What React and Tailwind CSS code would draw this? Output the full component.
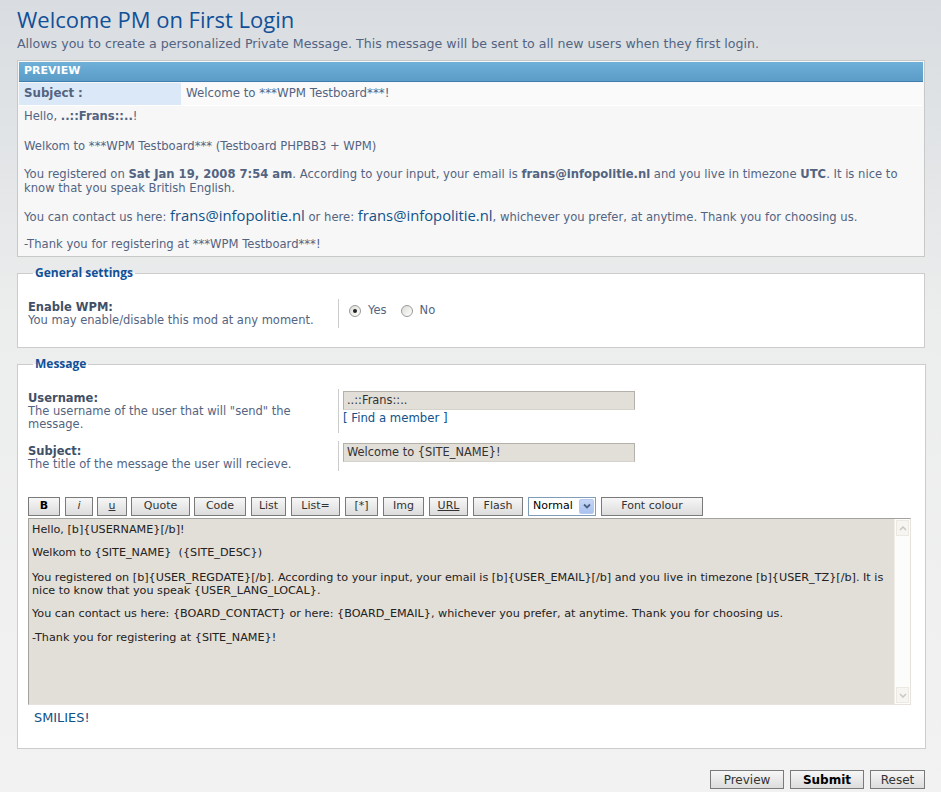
import React from "react";

const V = "font-['DejaVu_Sans',Verdana,sans-serif]";
const T = "font-['Open_Sans','DejaVu_Sans',sans-serif]";

function Btn({ children, className = "" }) {
  return (
    <div
      className={`h-[19px] shrink-0 flex items-center justify-center border border-[#7a7a7a] bg-gradient-to-b from-[#f7f7f7] to-[#dcdcdc] text-[11px] text-[#333] ${V} ${className}`}
    >
      {children}
    </div>
  );
}

function Radio({ checked }) {
  return (
    <span className="w-[12px] h-[12px] rounded-full border border-[#9a9a9a] bg-gradient-to-br from-[#dcdcd6] to-white flex items-center justify-center">
      {checked && <span className="w-[4px] h-[4px] rounded-full bg-[#222]" />}
    </span>
  );
}

export default function App() {
  return (
    <div className={`w-[941px] h-[792px] overflow-hidden bg-gradient-to-b from-[#d9dde1] via-[#eceded] via-40% to-[#f2f2f2] ${V}`}>
      <div className="pl-[17px] pr-[16px]">
        <h1 className={`${T} text-[22px] leading-[26px] text-[#115098] pt-[6px]`}>Welcome PM on First Login</h1>
        <p className="text-[12.6px] leading-[14px] text-[#536482] mt-[5px]">
          Allows you to create a personalized Private Message. This message will be sent to all new users when they first login.
        </p>

        {/* Preview */}
        <div className="mt-[9px] border border-[#c8c8c8] p-[1px] bg-[#f7f7f7]">
          <div className="h-[20px] bg-gradient-to-b from-[#6fb0d9] to-[#5b9cc8] border-b border-[#3f7fb0] flex items-center pl-[5px] text-[11px] font-bold text-white">
            PREVIEW
          </div>
          <div className="flex h-[23px] mt-[1px] border-b border-white text-[11.8px]">
            <div className="w-[162px] bg-[#dbe8f8] flex items-center pl-[5px] font-bold text-[#536482]">Subject :</div>
            <div className="flex-1 bg-[#fafafa] flex items-center pl-[5px] text-[#536482]">Welcome to ***WPM Testboard***!</div>
          </div>
          <div className="px-[5px] pt-[3px] pb-[4px] text-[11.6px] leading-[14px] text-[#536482]">
            <p>Hello, <b>..::Frans::..</b>!</p>
            <p className="mt-[16px]">Welkom to ***WPM Testboard*** (Testboard PHPBB3 + WPM)</p>
            <p className="mt-[14px]">
              You registered on <b>Sat Jan 19, 2008 7:54 am</b>. According to your input, your email is <b>frans@infopolitie.nl</b> and you live in timezone <b>UTC</b>. It is nice to know that you speak British English.
            </p>
            <p className="mt-[13px]">
              You can contact us here: <a className={`${T} text-[14.8px] text-[#105289]`}>frans@infopolitie.nl</a> or here: <a className={`${T} text-[14.8px] text-[#105289]`}>frans@infopolitie.nl</a>, whichever you prefer, at anytime. Thank you for choosing us.
            </p>
            <p className="mt-[13px]">-Thank you for registering at ***WPM Testboard***!</p>
          </div>
        </div>

        {/* General settings */}
        <fieldset className="mt-[8px] border border-[#cccccc] bg-white px-[10px] pb-[19px] pt-[18px]">
          <legend className={`ml-[5px] px-[2px] ${T} text-[12px] font-bold text-[#115098] leading-[16px]`}>General settings</legend>
          <div className="flex">
            <div className="w-[310px] text-[11.5px] leading-[13px] pt-[2px]">
              <div className="font-bold text-[#425067]">Enable WPM:</div>
              <div className="text-[#536482]">You may enable/disable this mod at any moment.</div>
            </div>
            <div className="border-l border-[#cccccc] h-[29px] pl-[10px] flex items-start pt-[3px] text-[11.5px] text-[#536482]">
              <span className="flex items-center gap-[7px]"><Radio checked /> Yes</span>
              <span className="flex items-center gap-[7px] ml-[14px]"><Radio /> No</span>
            </div>
          </div>
        </fieldset>

        {/* Message */}
        <fieldset className="mt-[8px] border border-[#cccccc] bg-white pl-[10px] pr-[14px] pb-[23px] pt-[17px]">
          <legend className={`ml-[5px] px-[2px] ${T} text-[12px] font-bold text-[#115098] leading-[16px]`}>Message</legend>
          <div className="flex">
            <div className="w-[310px] text-[11.5px] leading-[13px] pt-[3px]">
              <div className="font-bold text-[#425067]">Username:</div>
              <div className="text-[#536482] pr-[20px]">The username of the user that will "send" the message.</div>
            </div>
            <div className="border-l border-[#cccccc] h-[44px] pl-[4px] pt-[2px]">
              <div className="w-[292px] h-[19px] bg-[#e2ded8] border border-[#b4b0aa] border-b-[#d6d2cc] flex items-center pl-[3px] text-[11.4px] text-[#333]">..::Frans::..</div>
              <div className="text-[11.7px] leading-[16px] text-[#105289]">[ Find a member ]</div>
            </div>
          </div>
          <div className="flex mt-[8px]">
            <div className="w-[310px] text-[11.5px] leading-[13px] pt-[4px]">
              <div className="font-bold text-[#425067]">Subject:</div>
              <div className="text-[#536482]">The title of the message the user will recieve.</div>
            </div>
            <div className="border-l border-[#cccccc] h-[30px] pl-[4px] pt-[2px]">
              <div className="w-[292px] h-[19px] bg-[#e2ded8] border border-[#b4b0aa] border-b-[#d6d2cc] flex items-center pl-[3px] text-[11.4px] text-[#333]">Welcome to {"{SITE_NAME}"}!</div>
            </div>
          </div>

          {/* Toolbar */}
          <div className="flex items-center mt-[25px] h-[20px]">
            <Btn className="w-[32px] font-bold text-black">B</Btn>
            <Btn className="w-[28px] ml-[5px] italic">i</Btn>
            <Btn className="w-[30px] ml-[4px] underline">u</Btn>
            <Btn className="w-[59px] ml-[4px]">Quote</Btn>
            <Btn className="w-[52px] ml-[4px]">Code</Btn>
            <Btn className="w-[35px] ml-[5px]">List</Btn>
            <Btn className="w-[49px] ml-[5px]">List=</Btn>
            <Btn className="w-[33px] ml-[5px]">[*]</Btn>
            <Btn className="w-[41px] ml-[5px]">Img</Btn>
            <Btn className="w-[39px] ml-[5px] underline">URL</Btn>
            <Btn className="w-[50px] ml-[5px]">Flash</Btn>
            <div className="w-[68px] h-[19px] ml-[5px] shrink-0 border border-[#7f9db9] bg-white flex items-center justify-between pl-[4px] pr-[1px] text-[11px] text-black">
              Normal
              <span className="w-[15px] h-[15px] bg-gradient-to-b from-[#c6d6f7] to-[#a9c2ef] border border-[#b7c9ef] rounded-[2px] flex items-center justify-center">
                <svg width="8" height="6" viewBox="0 0 8 6"><path d="M1 1.5 L4 4.5 L7 1.5" stroke="#4d6185" strokeWidth="1.8" fill="none" /></svg>
              </span>
            </div>
            <Btn className="w-[102px] ml-[5px]">Font colour</Btn>
          </div>

          {/* Textarea */}
          <div className="mt-[2px] w-[883px] h-[187px] border border-[#a5a29d] border-r-[#e6e3de] border-b-[#e6e3de] bg-[#e2ded8] flex">
            <div className="flex-1 px-[3px] pt-[4px] text-[11.2px] leading-[13px] text-[#222]">
              <p>Hello, [b]{"{USERNAME}"}[/b]!</p>
              <p className="mt-[10px]">Welkom to {"{SITE_NAME}"}&nbsp; ({"{SITE_DESC}"})</p>
              <p className="mt-[12px]">You registered on [b]{"{USER_REGDATE}"}[/b]. According to your input, your email is [b]{"{USER_EMAIL}"}[/b] and you live in timezone [b]{"{USER_TZ}"}[/b]. It is nice to know that you speak {"{USER_LANG_LOCAL}"}.</p>
              <p className="mt-[10px]">You can contact us here: {"{BOARD_CONTACT}"} or here: {"{BOARD_EMAIL}"}, whichever you prefer, at anytime. Thank you for choosing us.</p>
              <p className="mt-[11px]">-Thank you for registering at {"{SITE_NAME}"}!</p>
            </div>
            <div className="w-[16px] bg-[#fcfcfa] border-l border-[#eeede8] flex flex-col justify-between">
              <div className="h-[16px] m-[1px] border border-[#ebe9e2] bg-[#f6f5f1] flex items-center justify-center">
                <svg width="8" height="5" viewBox="0 0 8 5"><path d="M1 4 L4 1 L7 4" stroke="#c9c7c0" strokeWidth="1.5" fill="none" /></svg>
              </div>
              <div className="h-[16px] m-[1px] border border-[#ebe9e2] bg-[#f6f5f1] flex items-center justify-center">
                <svg width="8" height="5" viewBox="0 0 8 5"><path d="M1 1 L4 4 L7 1" stroke="#c9c7c0" strokeWidth="1.5" fill="none" /></svg>
              </div>
            </div>
          </div>
          <div className="mt-[6px] pl-[6px] text-[12.9px] text-[#105289] leading-[14px]">SMILIES!</div>
        </fieldset>

        {/* Bottom buttons */}
        <div className="flex justify-end gap-[6px] mt-[21px]">
          <Btn className="w-[74px] text-[12px]">Preview</Btn>
          <Btn className="w-[74px] font-bold text-[12px] text-black">Submit</Btn>
          <Btn className="w-[55px] text-[12px]">Reset</Btn>
        </div>
      </div>
    </div>
  );
}
